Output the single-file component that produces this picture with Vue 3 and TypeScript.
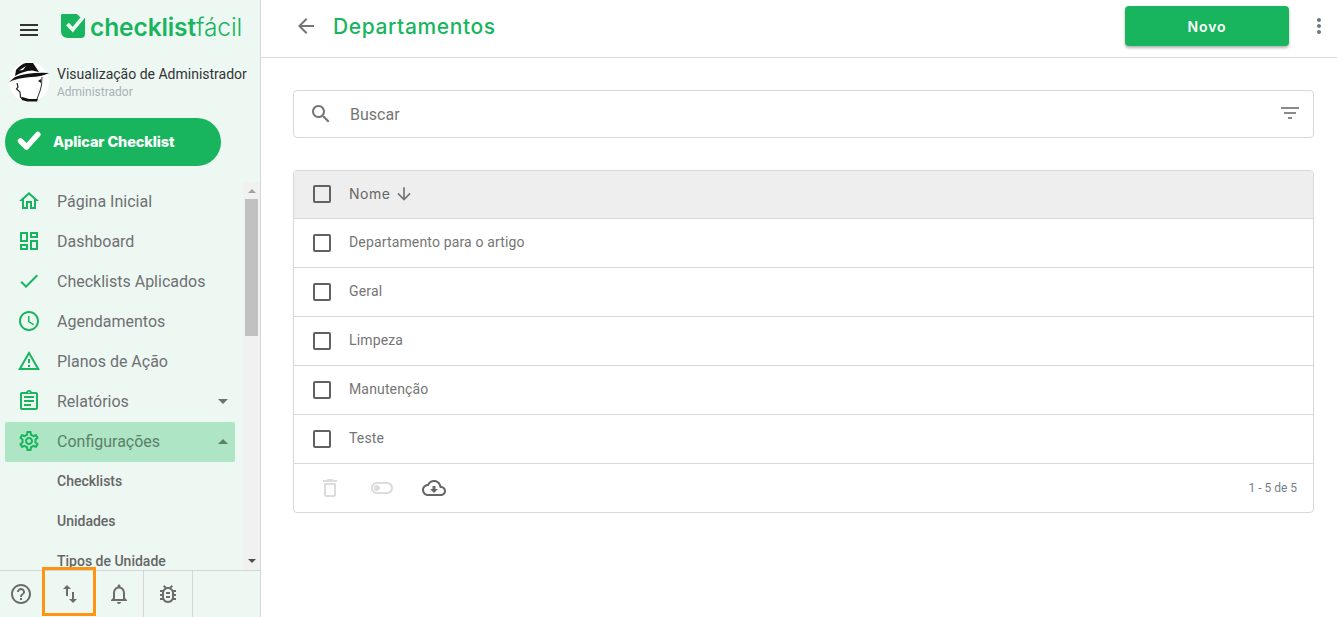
<script setup lang="ts">
interface NavItem {
  label: string
  path?: string
  caret?: 'up' | 'down'
  active?: boolean
  sub?: boolean
}

const navItems: NavItem[] = [
  { label: 'Página Inicial', path: 'M12 5.69l5 4.5V18h-2v-6H9v6H7v-7.81l5-4.5M12 3L2 12h3v8h6v-6h2v6h6v-8h3L12 3z' },
  { label: 'Dashboard', path: 'M19 5v2h-4V5h4M9 5v6H5V5h4m10 8v6h-4v-6h4M9 17v2H5v-2h4M21 3h-8v6h8V3zM11 3H3v10h8V3zm10 8h-8v10h8V11zm-10 4H3v6h8v-6z' },
  { label: 'Checklists Aplicados', path: 'M9 16.17L4.83 12l-1.42 1.41L9 19 21 7l-1.41-1.41z' },
  { label: 'Agendamentos', path: 'M11.99 2C6.47 2 2 6.48 2 12s4.47 10 9.99 10C17.52 22 22 17.52 22 12S17.52 2 11.99 2zM12 20c-4.42 0-8-3.58-8-8s3.58-8 8-8 8 3.58 8 8-3.58 8-8 8zm.5-13H11v6l5.25 3.15.75-1.23-4.5-2.67z' },
  { label: 'Planos de Ação', path: 'M12 5.99L19.53 19H4.47L12 5.99M12 2L1 21h22L12 2zm1 14h-2v2h2v-2zm0-6h-2v4h2v-4z' },
  { label: 'Relatórios', caret: 'down', path: 'M7 15h7v2H7zm0-4h10v2H7zm0-4h10v2H7zm12-4h-4.18C14.4 1.84 13.3 1 12 1c-1.3 0-2.4.84-2.82 2H5c-.14 0-.27.01-.4.04-.39.08-.74.28-1.01.55-.18.18-.33.4-.43.64-.1.23-.16.49-.16.77v14c0 .27.06.54.16.78s.25.45.43.64c.27.27.62.47 1.01.55.13.02.26.03.4.03h14c1.1 0 2-.9 2-2V5c0-1.1-.9-2-2-2zm-7-.25c.41 0 .75.34.75.75s-.34.75-.75.75-.75-.34-.75-.75.34-.75.75-.75zM19 19H5V5h14v14z' },
  { label: 'Configurações', caret: 'up', active: true, path: 'M19.43 12.98c.04-.32.07-.64.07-.98 0-.34-.03-.66-.07-.98l2.11-1.65c.19-.15.24-.42.12-.64l-2-3.46c-.09-.16-.26-.25-.44-.25-.06 0-.12.01-.17.03l-2.49 1c-.52-.4-1.08-.73-1.69-.98l-.38-2.65C14.46 2.18 14.25 2 14 2h-4c-.25 0-.46.18-.49.42l-.38 2.65c-.61.25-1.17.59-1.69.98l-2.49-1c-.06-.02-.12-.03-.18-.03-.17 0-.34.09-.43.25l-2 3.46c-.13.22-.07.49.12.64l2.11 1.65c-.04.32-.07.65-.07.98 0 .33.03.66.07.98l-2.11 1.65c-.19.15-.24.42-.12.64l2 3.46c.09.16.26.25.44.25.06 0 .12-.01.17-.03l2.49-1c.52.4 1.08.73 1.69.98l.38 2.65c.03.24.24.42.49.42h4c.25 0 .46-.18.49-.42l.38-2.65c.61-.25 1.17-.59 1.69-.98l2.49 1c.06.02.12.03.18.03.17 0 .34-.09.43-.25l2-3.46c.12-.22.07-.49-.12-.64l-2.11-1.65zm-1.98-1.71c.04.31.05.52.05.73 0 .21-.02.43-.05.73l-.14 1.13.89.7 1.08.84-.7 1.21-1.27-.51-1.04-.42-.9.68c-.43.32-.84.56-1.25.73l-1.06.43-.16 1.13-.2 1.35h-1.4l-.19-1.35-.16-1.13-1.06-.43c-.43-.18-.83-.41-1.23-.71l-.91-.7-1.06.43-1.27.51-.7-1.21 1.08-.84.89-.7-.14-1.13c-.03-.31-.05-.54-.05-.74s.02-.43.05-.73l.14-1.13-.89-.7-1.08-.84.7-1.21 1.27.51 1.04.42.9-.68c.43-.32.84-.56 1.25-.73l1.06-.43.16-1.13.2-1.35h1.39l.19 1.35.16 1.13 1.06.43c.43.18.83.41 1.23.71l.91.7 1.06-.43 1.27-.51.7 1.21-1.07.85-.89.7.14 1.13zM12 8c-2.21 0-4 1.79-4 4s1.79 4 4 4 4-1.79 4-4-1.79-4-4-4zm0 6c-1.1 0-2-.9-2-2s.9-2 2-2 2 .9 2 2-.9 2-2 2z' },
  { label: 'Checklists', sub: true },
  { label: 'Unidades', sub: true },
  { label: 'Tipos de Unidade', sub: true }
]

const footerIcons = [
  'M11 18h2v-2h-2v2zm1-16C6.48 2 2 6.48 2 12s4.48 10 10 10 10-4.48 10-10S17.52 2 12 2zm0 18c-4.41 0-8-3.59-8-8s3.59-8 8-8 8 3.59 8 8-3.59 8-8 8zm0-14c-2.21 0-4 1.79-4 4h2c0-1.1.9-2 2-2s2 .9 2 2c0 2-3 1.75-3 5h2c0-2.25 3-2.5 3-5 0-2.21-1.79-4-4-4z',
  'M16 17.01V10h-2v7.01h-3L15 21l4-3.99h-3zM9 3L5 6.99h3V14h2V6.99h3L9 3z',
  'M12 22c1.1 0 2-.9 2-2h-4c0 1.1.9 2 2 2zm6-6v-5c0-3.07-1.63-5.64-4.5-6.32V4c0-.83-.67-1.5-1.5-1.5s-1.5.67-1.5 1.5v.68C7.64 5.36 6 7.92 6 11v5l-2 2v1h16v-1l-2-2zm-2 1H8v-6c0-2.48 1.51-4.5 4-4.5s4 2.02 4 4.5v6z',
  'M20 8h-2.81c-.45-.78-1.07-1.45-1.82-1.96L17 4.41 15.59 3l-2.17 2.17C12.96 5.06 12.49 5 12 5s-.96.06-1.41.17L8.41 3 7 4.41l1.62 1.63C7.88 6.55 7.26 7.22 6.81 8H4v2h2.09c-.05.33-.09.66-.09 1v1H4v2h2v1c0 .34.04.67.09 1H4v2h2.81c1.04 1.79 2.97 3 5.19 3s4.15-1.21 5.19-3H20v-2h-2.09c.05-.33.09-.66.09-1v-1h2v-2h-2v-1c0-.34-.04-.67-.09-1H20V8zm-4 4v3c0 .22-.03.47-.07.7l-.1.65-.37.65c-.72 1.24-2.04 2-3.46 2s-2.74-.77-3.46-2l-.37-.64-.1-.65C8.03 15.47 8 15.22 8 15v-4c0-.23.03-.48.07-.7l.1-.65.37-.65c.3-.52.72-.97 1.21-1.31l.57-.39.74-.18c.31-.08.63-.12.94-.12.32 0 .63.04.95.12l.68.16.61.42c.5.34.91.78 1.21 1.31l.38.65.1.65c.04.22.07.47.07.69v1zm-6 2h4v2h-4zm0-4h4v2h-4z'
]

const rows = ['Departamento para o artigo', 'Geral', 'Limpeza', 'Manutenção', 'Teste']
</script>

<template>
  <div class="page">
    <aside class="sidebar">
      <div class="brand">
        <svg class="burger" viewBox="0 0 24 24"><path d="M3 18h18v-2H3v2zm0-5h18v-2H3v2zm0-7v2h18V6H3z" /></svg>
        <svg class="logo-mark" viewBox="0 0 24 24">
          <path fill="#18b55e" d="M1 0H16L19 3H24V20Q24 24 20 24H7Q0 24 0 17V1Z" />
          <path fill="none" stroke="#eef8f3" stroke-width="3.8" d="M6.500 10 11.700 15.700 23.500 1.500" />
        </svg>
        <span class="logo-text"><b>checklist</b>fácil</span>
      </div>

      <div class="user">
        <svg class="avatar" viewBox="0 0 40 40">
          <circle cx="20" cy="20" r="20" fill="#fff" />
          <path fill="none" stroke="#222" stroke-width="1.200" d="M8 21 9 25 7.500 27 11 30 11.500 35 14 38" />
          <path fill="none" stroke="#333" stroke-width="1" d="M33 15Q33 24 31 29L28 37" />
          <path fill="#111" d="M13 35 20 37 29 37 28 39.500 18 39.500 13 38Z" />
          <path fill="#222" d="M29 19 32 17 32 21Z" />
          <path fill="#111" d="M0 20 6 15Q20 10 40 11 32 15 22 15 8 16 0 20Z" />
          <path fill="#111" d="M6 14 7 8Q12 2 17 1H24L30 10 23 8.500Q14 9 6 14Z" />
          <path fill="#fff" d="M10 8.500 17 4 14 8Z" />
        </svg>
        <div class="user-text">
          <div class="user-name">Visualização de Administrador</div>
          <div class="user-role">Administrador</div>
        </div>
      </div>

      <button class="apply">
        <svg class="apply-check" viewBox="0 0 24 20">
          <path fill="none" stroke="#fff" stroke-width="5.500" stroke-linecap="round" stroke-linejoin="round" d="M3.500 10 9.500 16 20.800 3.500" />
        </svg>
        <span>Aplicar Checklist</span>
      </button>

      <div class="nav-wrap">
        <nav class="nav">
          <div v-for="item in navItems" :key="item.label" class="nav-item" :class="{ active: item.active, sub: item.sub }">
            <svg v-if="item.path" class="nav-icon" viewBox="0 0 24 24"><path :d="item.path" /></svg>
            <span class="nav-label">{{ item.label }}</span>
            <i v-if="item.caret" class="caret" :class="item.caret" />
          </div>
        </nav>
        <div class="scrollbar">
          <i class="sb-arrow up" />
          <div class="sb-track"><div class="sb-thumb" /></div>
          <i class="sb-arrow down" />
        </div>
      </div>

      <div class="side-footer">
        <div v-for="(d, i) in footerIcons" :key="i" class="foot-cell" :class="'cell-' + i">
          <svg viewBox="0 0 24 24"><path :d="d" /></svg>
        </div>
        <div class="highlight" />
      </div>
    </aside>

    <main class="main">
      <header class="topbar">
        <svg class="back" viewBox="0 0 24 24"><path d="M20 11H7.830l5.590-5.590L12 4l-8 8 8 8 1.410-1.410L7.830 13H20v-2z" /></svg>
        <h1 class="title">Departamentos</h1>
        <button class="novo">Novo</button>
        <svg class="more" viewBox="0 0 24 24"><path d="M12 8c1.100 0 2-.9 2-2s-.9-2-2-2-2 .9-2 2 .9 2 2 2zm0 2c-1.100 0-2 .9-2 2s.9 2 2 2 2-.9 2-2-.9-2-2-2zm0 6c-1.100 0-2 .9-2 2s.9 2 2 2 2-.9 2-2-.9-2-2-2z" /></svg>
      </header>

      <section class="content">
        <div class="search">
          <svg class="search-icon" viewBox="0 0 24 24"><path d="M15.500 14h-.79l-.28-.27C15.410 12.590 16 11.110 16 9.500 16 5.910 13.090 3 9.500 3S3 5.910 3 9.500 5.910 16 9.500 16c1.610 0 3.090-.59 4.230-1.570l.27.28v.79l5 4.990L20.490 19l-4.990-5zm-6 0C7.010 14 5 11.990 5 9.500S7.010 5 9.500 5 14 7.010 14 9.500 11.990 14 9.500 14z" /></svg>
          <span class="search-text">Buscar</span>
          <svg class="filter-icon" viewBox="0 0 24 24"><path d="M10 18h4v-2h-4v2zM3 6v2h18V6H3zm3 7h12v-2H6v2z" /></svg>
        </div>

        <div class="table">
          <div class="row head">
            <span class="box" />
            <span class="col-name">Nome</span>
            <svg class="sort" viewBox="0 0 24 24"><path d="M20 12l-1.410-1.410L13 16.170V4h-2v12.170l-5.580-5.590L4 12l8 8 8-8z" /></svg>
          </div>
          <div v-for="r in rows" :key="r" class="row">
            <span class="box" />
            <span class="cell">{{ r }}</span>
          </div>
          <div class="table-foot">
            <svg class="tool trash" viewBox="0 0 24 24"><path d="M6 19c0 1.100.9 2 2 2h8c1.100 0 2-.9 2-2V7H6v12zM8 9h8v10H8V9zm7.500-5l-1-1h-5l-1 1H5v2h14V4z" /></svg>
            <svg class="tool toggle" viewBox="0 0 24 24"><path d="M17 6H7c-3.310 0-6 2.690-6 6s2.690 6 6 6h10c3.310 0 6-2.690 6-6s-2.690-6-6-6zm0 10H7c-2.210 0-4-1.790-4-4s1.790-4 4-4h10c2.210 0 4 1.790 4 4s-1.790 4-4 4zM7 9c-1.660 0-3 1.340-3 3s1.340 3 3 3 3-1.340 3-3-1.340-3-3-3z" /></svg>
            <svg class="tool cloud" viewBox="0 0 24 24"><path d="M19.350 10.040C18.670 6.590 15.640 4 12 4 9.110 4 6.600 5.640 5.350 8.040 2.340 8.360 0 10.910 0 14c0 3.310 2.690 6 6 6h13c2.760 0 5-2.240 5-5 0-2.640-2.050-4.780-4.650-4.960zM19 18H6c-2.210 0-4-1.790-4-4 0-2.050 1.530-3.760 3.560-3.970l1.070-.11.5-.95C8.080 7.140 9.940 6 12 6c2.620 0 4.880 1.860 5.390 4.430l.3 1.500 1.530.11c1.560.1 2.780 1.410 2.780 2.960 0 1.650-1.350 3-3 3zm-5.550-8h-2.900v3H8l4 4 4-4h-2.550z" /></svg>
            <span class="pager">1 - 5 de 5</span>
          </div>
        </div>
      </section>
    </main>
  </div>
</template>

<style scoped>
.page {
  display: flex;
  height: 617px;
  overflow: hidden;
  background: #fff;
  font-family: Roboto, "Liberation Sans", sans-serif;
}
.sidebar {
  width: 260px;
  flex: none;
  display: flex;
  flex-direction: column;
  background: #eef8f3;
  border-right: 1px solid #d6d6d6;
}
.brand {
  height: 58px;
  flex: none;
  display: flex;
  align-items: center;
  padding-left: 17px;
}
.burger {
  width: 24px;
  height: 24px;
  fill: #333;
  margin-top: 1px;
}
.logo-mark {
  width: 24px;
  height: 24px;
  margin-left: 20px;
  margin-top: -6px;
}
.logo-text {
  margin-left: 5px;
  margin-top: -5px;
  font-family: Inter, sans-serif;
  font-size: 24.500px;
  font-weight: 300;
  letter-spacing: -0.1px;
  color: #18b55e;
  white-space: nowrap;
}
.logo-text b {
  font-weight: 600;
}
.user {
  height: 48px;
  flex: none;
  display: flex;
  align-items: center;
  padding-left: 9px;
}
.avatar {
  width: 40px;
  height: 40px;
  flex: none;
}
.user-text {
  margin-left: 8px;
}
.user-name {
  font-size: 14px;
  line-height: 18px;
  color: #333;
  white-space: nowrap;
}
.user-role {
  font-size: 12px;
  line-height: 16px;
  padding-top: 1px;
  color: #a9b0b5;
}
.apply {
  flex: none;
  width: 216px;
  height: 48px;
  margin: 12px 0 0 5px;
  padding: 0 0 2px 12px;
  display: flex;
  align-items: center;
  gap: 12px;
  border: 0;
  border-radius: 24px;
  background: #18b55e;
  color: #fff;
  font-family: Inter, sans-serif;
  font-size: 14.500px;
  font-weight: 800;
  letter-spacing: -0.1px;
}
.apply-check {
  width: 24px;
  height: 20px;
}
.nav-wrap {
  flex: 1;
  min-height: 0;
  display: flex;
  margin-top: 16px;
}
.nav {
  flex: 1;
  min-width: 0;
  overflow: hidden;
  padding: 0 8px 0 5px;
}
.nav-item {
  height: 40px;
  display: flex;
  align-items: center;
  border-radius: 2px;
  color: #6f7072;
  font-size: 16px;
}
.nav-item.active {
  background: #aee5c5;
  color: #5c7f6b;
}
.nav-item.sub {
  padding-left: 52px;
  font-size: 14px;
  font-weight: 500;
  color: #666;
}
.nav-icon {
  width: 24px;
  height: 24px;
  margin: -2px 16px 0 12px;
  fill: #18b55e;
  flex: none;
}
.nav-label {
  flex: 1;
  margin-top: -2px;
  white-space: nowrap;
}
.caret {
  width: 0;
  height: 0;
  margin: -2px 7px 0 0;
  border-left: 5px solid transparent;
  border-right: 5px solid transparent;
}
.caret.down {
  border-top: 5px solid #6f7072;
}
.caret.up {
  border-bottom: 5px solid #5c7f6b;
}
.scrollbar {
  width: 17px;
  flex: none;
  display: flex;
  flex-direction: column;
  align-items: center;
  background: #f1f1f1;
}
.sb-track {
  flex: 1;
  width: 100%;
  min-height: 0;
  padding: 3px 2px 0;
  box-sizing: border-box;
}
.sb-thumb {
  height: 137px;
  background: #c1c1c1;
}
.sb-arrow {
  flex: none;
  width: 0;
  height: 0;
  border-left: 4px solid transparent;
  border-right: 4px solid transparent;
}
.sb-arrow.up {
  margin: 7px 0 3px;
  border-bottom: 4px solid #a3a3a3;
}
.sb-arrow.down {
  margin: 3px 0 7px;
  border-top: 4px solid #505050;
}
.side-footer {
  position: relative;
  height: 46px;
  flex: none;
  display: flex;
  border-top: 1px solid #d6d6d6;
}
.foot-cell {
  display: flex;
  align-items: center;
  justify-content: center;
  border-right: 1px solid #d6d6d6;
}
.foot-cell svg {
  width: 24px;
  height: 24px;
  fill: #6c6c6c;
}
.cell-0 {
  width: 42px;
  border-right: 0;
}
.cell-1 {
  width: 51px;
  padding-left: 2px;
  border-right: 0;
}
.cell-2 {
  width: 48px;
}
.cell-3 {
  width: 48px;
}
.highlight {
  position: absolute;
  left: 42px;
  top: -4px;
  width: 54px;
  height: 49px;
  box-sizing: border-box;
  border: 3px solid #ff9410;
}
.main {
  flex: 1;
  min-width: 0;
  display: flex;
  flex-direction: column;
}
.topbar {
  height: 52px;
  flex: none;
  display: flex;
  align-items: center;
  padding: 0 6px 5px 33px;
  border-bottom: 1px solid #d8d8d8;
}
.back {
  width: 24px;
  height: 24px;
  fill: #757575;
}
.title {
  flex: 1;
  margin: 0 0 0 15px;
  font-family: Inter, sans-serif;
  font-size: 21px;
  font-weight: 500;
  letter-spacing: 0.6px;
  color: #18b55e;
}
.novo {
  width: 164px;
  height: 40px;
  border: 0;
  border-radius: 4px;
  background: #18b55e;
  box-shadow: 0 2px 3px rgba(0, 0, 0, 0.3);
  color: #fff;
  font-family: Inter, sans-serif;
  font-size: 14px;
  font-weight: 600;
  letter-spacing: 0.9px;
}
.more {
  width: 24px;
  height: 24px;
  margin-left: 18px;
  fill: #6d7683;
}
.content {
  padding: 32px 23px 0 32px;
}
.search {
  height: 46px;
  display: flex;
  align-items: center;
  padding: 0 11px 0 15px;
  border: 1px solid #d8d8d8;
  border-radius: 4px;
}
.search-icon {
  width: 24px;
  height: 24px;
  fill: #757575;
}
.search-text {
  flex: 1;
  margin-left: 17px;
  font-size: 16px;
  color: #757575;
}
.filter-icon {
  width: 24px;
  height: 24px;
  margin-top: -2px;
  fill: #8a8a8a;
}
.table {
  margin-top: 32px;
  border: 1px solid #d8d8d8;
  border-radius: 4px;
  overflow: hidden;
}
.row {
  height: 48px;
  display: flex;
  align-items: center;
  padding-left: 19px;
  border-bottom: 1px solid #d8d8d8;
}
.row.head {
  height: 45px;
  padding-bottom: 2px;
  background: #eee;
}
.box {
  width: 18px;
  height: 18px;
  flex: none;
  border: 2px solid #616161;
  border-radius: 2px;
  box-sizing: border-box;
}
.cell,
.col-name {
  margin-left: 18px;
  font-size: 14px;
  color: #757575;
}
.cell {
  margin-top: -2px;
  letter-spacing: 0.15px;
}
.col-name {
  font-family: Inter, sans-serif;
  font-weight: 400;
  font-size: 14px;
  letter-spacing: 0.5px;
  color: #666;
}
.sort {
  width: 20px;
  height: 20px;
  margin-left: 4px;
  fill: #757575;
}
.table-foot {
  height: 48px;
  display: flex;
  align-items: center;
  padding: 0 16px 0 24px;
}
.tool {
  width: 24px;
  height: 24px;
  fill: #dcdcdc;
  margin-right: 28px;
}
.cloud {
  fill: #666;
  margin-right: 0;
}
.pager {
  margin-left: auto;
  font-size: 12px;
  color: #757f8a;
}
</style>

<style>
html,
body {
  margin: 0;
  overflow: hidden;
}
</style>
